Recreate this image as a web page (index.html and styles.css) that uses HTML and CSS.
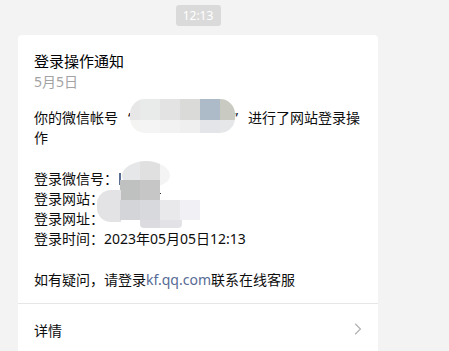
FILE: index.html
```html
<!DOCTYPE html>
<html lang="zh-CN">
<head>
<meta charset="utf-8">
<title>登录操作通知</title>
<link rel="stylesheet" href="styles.css">
</head>
<body>
<div class="chat">
  <div class="time-row"><span class="time-pill">12:13</span></div>
  <div class="card">
    <div class="card-body">
      <div class="title">登录操作通知</div>
      <div class="date">5月5日</div>
      <p class="para">你的微信帐号<span class="q-open">“</span><span class="redact"></span><span class="q-close">”</span>进行了网站登录操<br>作</p>
      <p class="para">登录微信号：<br>登录网站：<br>登录网址：<br>登录时间：2023年05月05日12:13</p>
      <p class="para">如有疑问，请登录<span class="link">kf.qq.com</span>联系在线客服</p>
    </div>
    <div class="card-foot">
      <span>详情</span>
      <svg class="chev" width="8" height="12" viewBox="0 0 8 12"><path d="M1.2 0.8 L6.4 6 L1.2 11.2" fill="none" stroke="#b4b4b4" stroke-width="1.3"/></svg>
    </div>

    <span class="mosaic m1"></span>
    <span class="frag bar"></span>
    <span class="frag dash"></span>
    <span class="mosaic m2a"></span>
    <span class="mosaic m2b"></span>
    <span class="mosaic m3cap"></span>
    <span class="mosaic m3"></span>
    <span class="mosaic m3low"></span>
  </div>
</div>
</body>
</html>
```
FILE: styles.css
```css
html, body {
  margin: 0;
  padding: 0;
  background: #f3f3f3;
  height: 100%;
  overflow: hidden;
}
body {
  font-family: "Noto Sans", "Noto Sans CJK SC", sans-serif;
  color: #0d0d0d;
}
.chat {
  width: 360px;
  margin-left: 18px;
}
.time-row {
  display: flex;
  justify-content: center;
  padding-top: 5px;
}
.time-pill {
  width: 45px;
  height: 21px;
  line-height: 21px;
  text-align: center;
  font-size: 12px;
  color: #fff;
  background: #dadada;
  border-radius: 3px;
}
.card {
  position: relative;
  margin-top: 9px;
  background: #fff;
  border-radius: 4px 4px 0 0;
  height: 316px;
  overflow: hidden;
}
.card-body {
  padding: 15px 16px 0 16px;
}
.title {
  font-size: 15px;
  line-height: 22px;
  color: #000;
}
.date {
  font-size: 14px;
  line-height: 20px;
  color: #a3a3a3;
}
.para {
  margin: 16px 0 0 0;
  font-size: 14px;
  line-height: 20.2px;
}
.para + .para {
  margin-top: 20.2px;
}
.q-open {
  margin-left: 10px;
}
.q-close {
  margin-right: 10px;
}
.redact {
  display: inline-block;
  width: 100px;
  height: 1px;
}
.link {
  color: #576b95;
}
.card-foot {
  margin-top: 13px;
  border-top: 1px solid #e6e6e6;
  padding: 17px 16px 0 16px;
  display: flex;
  justify-content: space-between;
  align-items: flex-start;
  font-size: 14px;
  line-height: 20.2px;
}
.chev {
  margin-top: 2px;
}

/* mosaic redaction overlays */
.mosaic, .frag {
  position: absolute;
  display: block;
}
.m1 {
  left: 112px;
  top: 64px;
  width: 105px;
  height: 34px;
  border-radius: 15px;
  background:
    linear-gradient(to right, #e7e7e7 0 10px, #e9ebeb 10px 30px, #e3e3e3 30px 50px, #dadad8 50px 70px, #adbac8 70px 90px, #c9cac2 90px) top / 100% 21px no-repeat,
    linear-gradient(to right, #f4f4f2 0 10px, #f4f4f4 10px 30px, #f2f2f2 30px 50px, #efefef 50px 70px, #e3e5e8 70px 90px, #e6e7e9 90px) bottom / 100% 13px no-repeat;
}
.bar {
  left: 101px;
  top: 138px;
  width: 2px;
  height: 12px;
  background: #5b6f95;
}
.dash {
  left: 132px;
  top: 158px;
  width: 11px;
  height: 1px;
  background: #333;
}
.m2a {
  left: 104px;
  top: 126px;
  width: 48px;
  height: 26px;
  border-radius: 24px 24px 20px 20px / 15px 15px 11px 11px;
  background: linear-gradient(to right, #e6e7e9 0 18px, #e0e0e0 18px 38px, #f3f4f3 38px);
}
.m2b {
  left: 102px;
  top: 145px;
  width: 40px;
  height: 20px;
  background: linear-gradient(to right, #bfc0c0 0 20px, #c6c6c6 20px);
}
.m3cap {
  left: 79px;
  top: 155px;
  width: 24px;
  height: 32px;
  border-radius: 14px 0 0 14px;
  background: #e3e3e5;
}
.m3 {
  left: 102px;
  top: 165px;
  width: 80px;
  height: 20px;
  background: linear-gradient(to right, #d4d5d8 0 20px, #d8d9dc 20px 40px, #e9e9ec 40px 60px, #f1f1f5 60px);
}
.m3low {
  left: 122px;
  top: 185px;
  width: 42px;
  height: 8px;
  border-radius: 0 0 4px 4px;
  background: linear-gradient(to right, #dcdce0 0 20px, #e3e3e7 20px);
}
```
